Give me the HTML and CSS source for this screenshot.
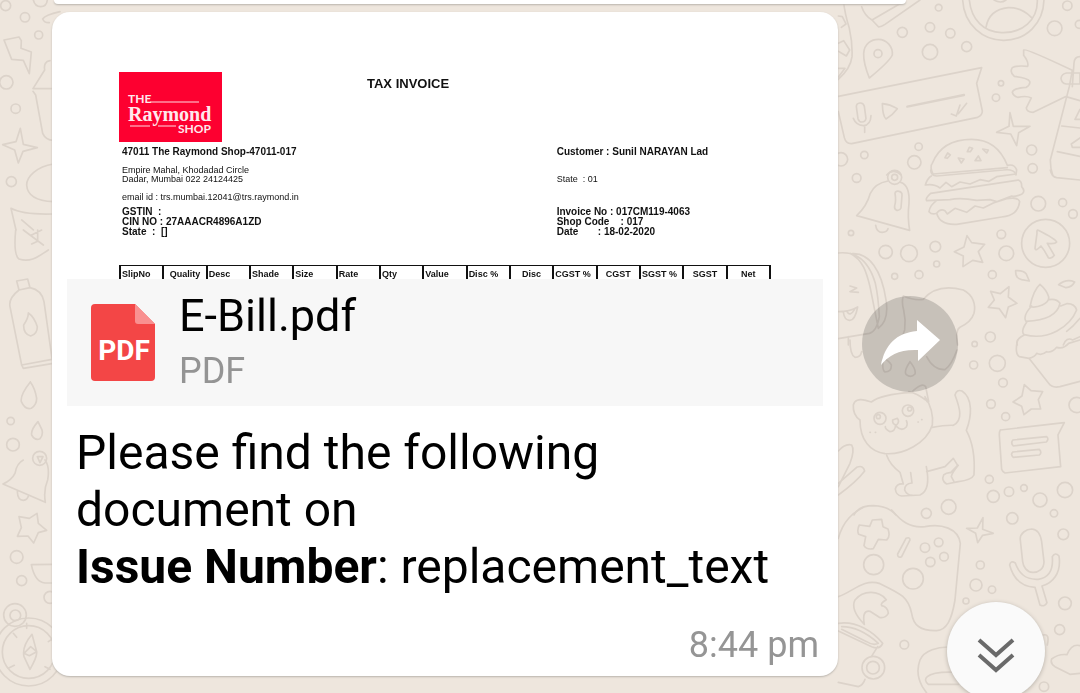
FILE: index.html
```html
<!DOCTYPE html>
<html lang="en">
<head>
<meta charset="utf-8">
<meta name="viewport" content="width=device-width, initial-scale=1">
<title>Chat</title>
<link rel="stylesheet" href="styles.css">
</head>
<body>
<svg class="wallpaper" viewBox="0 0 1080 693" preserveAspectRatio="xMidYMid slice" aria-hidden="true">
  <g transform="translate(830 0) scale(.3333)">
    <path d="M95 20Q104 47 126 60L146 81Q154 80 165 73L270 0M126 60L215 8M40 0Q44 40 58 85Q68 130 66 170Q62 205 25 238M25 48l12 2 11 22-14 10M25 130l16-8 18 28-10 18-24-14M25 205h20l-20 26"/>
    <path d="M398 0C402 75 460 122 522 121C590 120 640 70 642 0M418 0C424 60 462 97 515 98C577 100 624 60 622 0M468 82Q478 28 535 23Q575 22 604 52M492 0q20 12 36 0"/>
    <path d="M118 234Q100 190 101 160C103 130 125 118 145 118C171 118 189 141 187 165Q178 185 118 234Z"/><circle cx="144" cy="161" r="12"/>
    <path d="M25 289L455 203L440 250L457 333Q457 346 443 352L65 431Q48 432 43 413L25 335M79 320q0-10 11-11 10-1 13 10l5 36q-2 11-12 11-9 0-12-10zM70 355q8 20 30 22 22-2 23-30M104 377v20M157 311Q180 313 202 326Q187 346 168 357Q158 348 157 311M364 342l15 6 11-33M385 341l25-31"/><path d="M232 320L402 285" stroke-width="7"/>
    <path d="M582 150Q588 145 727 211M706 290L610 337Q590 336 589 324L604 294Q590 286 563 292Q550 288 547 277Q551 264 589 262Q602 254 599 244Q594 234 553 229Q538 217 547 203Q558 196 593 199Q597 187 581 166V150M727 211L718 260L661 480Q661 505 668 525M750 170Q733 170 732 190L727 260M693 235q2-14 17-16h40v33h-41q-14-2-16-17M708 290l42 12M695 378l55 6M682 455l68 14M750 328l-15 30h15M750 414l-26 18 3 10h23"/>
    <path d="M540 338L550 379L600 379L566 398L560 437L542 402L500 397L537 379Z"/>
    <path d="M310 525Q298 500 307 490Q335 418 425 418C475 418 510 440 532 496Q554 491 560 510L558 525M310 522L532 503M345 473l8-14 8 6-9 10zM412 455l6-13 10 3-7 10zM385 474l17 3-8 12zM435 482l10-14 8 14zM458 447l17 3-5 9z"/>
    <circle cx="326" cy="23" r="10"/><circle cx="217" cy="97" r="15"/><circle cx="300" cy="82" r="14"/><circle cx="361" cy="100" r="14"/><circle cx="300" cy="156" r="23"/><circle cx="410" cy="140" r="15"/><circle cx="712" cy="17" r="14"/><circle cx="674" cy="85" r="22"/><circle cx="748" cy="73" r="12"/><circle cx="513" cy="250" r="8"/><circle cx="498" cy="293" r="11"/><circle cx="266" cy="440" r="11"/><circle cx="253" cy="487" r="20"/><circle cx="103" cy="465" r="11"/><circle cx="33" cy="478" r="20"/><circle cx="605" cy="450" r="15"/><circle cx="608" cy="505" r="14"/><path d="M170 525q20-22 43 0"/>
  </g>
  <g transform="translate(830 170) scale(.3333)">
    <path d="M80 137Q110 110 121 70Q135 40 174 33M212 37Q240 45 237 100Q232 140 239 181L80 137M137 166Q140 187 157 187Q171 186 174 176M195 70q2-8 12-6 10 2 9 12l-3 38q-4 9-13 7-8-3-6-14 5-15 1-37z"/><circle cx="194" cy="22" r="21"/><circle cx="194" cy="22" r="9"/>
    <path d="M302 0Q303 17 320 18L520 0Q550 -4 558 12L500 20L477 34L450 29L420 42L390 36L365 50L348 37L330 54Q312 40 286 45Q292 25 304 18M302 70L565 30Q576 34 575 50Q588 65 575 73Q553 82 545 78L500 95L480 89L440 91Q390 82 360 89L290 92Q285 85 302 70M320 92Q300 105 297 125Q305 135 320 130Q330 115 345 122L352 132L375 115L410 127L435 108L460 114L490 99L530 86Q565 80 569 95C565 125 548 137 515 141L380 163Q330 166 320 130"/>
    <path d="M411 197L425 218L464 223L445 245L458 277L428 271L399 290L400 258L373 245L402 231ZM537 350L535 381L561 400L535 411L527 443L508 416L475 412L493 390L482 364L511 371Z"/>
    <circle cx="647" cy="220" r="72"/><path d="M625 181Q620 178 621 190L615 235Q617 245 633 228Q643 240 655 263Q665 268 673 256Q662 237 652 220Q675 223 680 216Q676 207 625 181Z"/>
    <path d="M661 0Q665 20 680 23L750 30M557 302Q580 300 589 312L598 333L575 329Q556 325 557 302ZM686 344Q710 325 734 336Q725 352 708 353ZM600 410Q610 360 630 343Q650 360 656 380C660 402 620 415 600 410ZM605 408Q577 438 588 454Q680 450 690 400Q680 385 657 389M592 454Q570 485 583 494C655 513 720 470 740 420Q734 400 710 401L692 408M583 495Q555 508 562 525M750 445Q730 470 710 484M700 525q10-25 28-15l22-10"/>
    <path d="M25 249C90 242 120 285 136 340Q145 380 148 440Q140 485 118 490L25 506M60 250C100 270 110 310 120 350L145 475Q178 450 168 390C155 300 117 248 67 251M60 348l20 6-20 11 25 2M25 425Q60 425 83 411Q75 453 58 451Q43 450 40 426M52 426q8 15 22-8M55 500v25"/>
    <path d="M220 378Q255 393 280 388C310 352 355 348 400 360C430 375 438 405 432 430Q424 456 390 472Q375 480 383 525M220 378Q214 395 221 420Q228 450 224 480Q215 510 195 525"/>
    <circle cx="80" cy="24" r="13"/><circle cx="63" cy="189" r="8"/><circle cx="167" cy="246" r="20"/><circle cx="237" cy="250" r="25"/><circle cx="316" cy="230" r="16"/><circle cx="320" cy="282" r="9"/><circle cx="194" cy="319" r="9"/><circle cx="267" cy="314" r="12"/><circle cx="514" cy="193" r="13"/><circle cx="529" cy="250" r="22"/><circle cx="625" cy="101" r="22"/><circle cx="698" cy="98" r="12"/><circle cx="729" cy="132" r="13"/><circle cx="487" cy="314" r="12"/><circle cx="481" cy="501" r="15"/>
  </g>
  <g transform="translate(830 340) scale(.3333)">
    <path d="M124 186C150 165 200 160 245 157Q275 126 287 140L296 185Q291 190 285 170Q312 210 307 255C290 310 220 345 165 341C120 335 90 300 90 240Q68 225 70 195Q75 173 107 181ZM236 155Q260 160 287 180M307 262Q345 255 370 256C400 240 390 205 375 165Q380 147 396 153C430 175 425 230 409 271C430 310 435 360 432 405Q425 420 385 425L350 432Q333 422 341 405Q350 397 362 398L383 376L370 355L345 380L290 395M170 346Q180 375 210 397L220 432Q200 430 196 447Q198 466 215 468L270 465C294 455 298 425 289 380M242 398L246 429Q224 430 224 450Q230 465 247 466M385 376Q365 400 364 410L372 425M188 240Q186 253 200 255Q210 245 202 235ZM197 255Q195 275 180 275Q165 268 166 260M200 260Q215 275 229 261Q234 250 229 242M120 277h1M136 277h1M264 246h1M275 239h1"/><circle cx="150" cy="235" r="18"/><circle cx="234" cy="212" r="17"/><circle cx="145" cy="230" r="6"/><circle cx="239" cy="207" r="6"/>
    <path d="M25 333Q45 310 65 315Q75 330 60 370L25 440M25 430L80 382Q100 374 104 393Q80 425 25 465M60 0Q60 45 75 52Q92 52 95 35"/>
    <path d="M511 270L703 248L684 285L692 380L525 399Q517 395 515 388L508 285Q508 274 511 270M549 300L650 290Q658 297 649 306L550 318Q541 308 549 300M549 336L628 328Q637 338 628 345L550 352Q540 343 549 336"/>
    <path d="M583 134L603 152L638 155L625 179L632 207L604 207L582 224L575 199L549 186L576 168Z"/>
    <path d="M563 0Q553 40 568 50L597 55Q615 50 620 40Q635 48 650 35Q665 40 680 22Q700 28 716 10L750 0M597 55L656 130Q666 145 690 140L750 124M240 65Q220 95 229 104Q243 115 255 102Q259 88 240 65M160 55Q155 90 165 96Q185 96 184 75Q178 63 160 55M290 50Q310 90 345 89Q365 75 381 30"/>
    <path d="M72 525Q85 497 130 497Q175 498 198 525"/>
    <circle cx="434" cy="12" r="8"/><circle cx="431" cy="75" r="12"/><circle cx="502" cy="70" r="24"/><circle cx="519" cy="128" r="13"/><circle cx="483" cy="192" r="13"/><circle cx="527" cy="230" r="12"/><circle cx="740" cy="195" r="23"/><circle cx="478" cy="418" r="12"/><circle cx="490" cy="469" r="18"/><circle cx="537" cy="455" r="14"/><circle cx="582" cy="444" r="10"/><circle cx="630" cy="480" r="21"/><circle cx="705" cy="450" r="23"/><circle cx="356" cy="501" r="22"/>
  </g>
  <g transform="translate(830 510) scale(.3333)">
    <path d="M25 85C40 30 70 8 100 -8M185 0C215 35 240 55 285 50C335 40 385 55 391 100L375 270C365 330 350 360 320 362C270 363 250 345 245 310C235 260 210 250 150 221C100 205 70 245 25 260M127 30L155 28L159 50L174 57Q182 80 170 90L145 88L130 116Q110 120 102 107L107 80L86 73Q80 60 88 45L119 49ZM228 85Q240 80 240 90L215 140Q202 145 203 132Z"/>
    <circle cx="131" cy="164" r="30"/><circle cx="249" cy="206" r="31"/><circle cx="285" cy="113" r="14"/><circle cx="326" cy="97" r="13"/><circle cx="342" cy="140" r="13"/><circle cx="301" cy="156" r="14"/>
    <path d="M459 23L458 58L490 70L458 76L443 98L437 70L410 55L442 54Z"/>
    <path d="M571 90C568 70 590 57 605 57C623 58 632 75 635 95L642 155C642 177 625 188 608 187C590 186 580 171 578 155ZM539 165Q542 150 556 159C570 200 600 210 625 208C659 203 670 175 667 140Q676 125 687 138C695 190 667 220 636 228L651 278Q645 292 630 285L615 232C575 230 551 210 539 165"/>
    <path d="M103 343Q60 300 75 270C100 240 145 240 169 269Q150 280 155 287Q173 290 175 310Q165 326 148 322L120 304Q95 300 103 343M25 340C80 332 130 365 158 400Q150 420 125 410L25 363M35 350Q90 350 145 400Q130 408 110 395L35 358M143 410L126 437M25 517L85 530Q100 525 105 508"/>
    <circle cx="130" cy="473" r="34"/><circle cx="129" cy="473" r="19"/>
    <path d="M380 413C320 405 280 425 270 450Q255 490 277 530L290 549M385 487Q310 483 292 500Q280 510 295 523L385 523M750 407Q725 400 711 434Q685 431 665 447Q660 460 675 470L720 493L750 490M640 375Q660 370 652 405"/>
    <circle cx="289" cy="10" r="15"/><circle cx="547" cy="25" r="17"/><circle cx="672" cy="10" r="11"/><circle cx="700" cy="73" r="16"/><circle cx="451" cy="165" r="12"/><circle cx="438" cy="225" r="18"/><circle cx="486" cy="239" r="11"/><circle cx="408" cy="273" r="9"/><circle cx="705" cy="280" r="19"/><circle cx="689" cy="359" r="15"/><circle cx="223" cy="404" r="13"/><circle cx="642" cy="530" r="14"/>
  </g>
  <g transform="scale(.3333)">
    <path d="M12 120L57 111L64 122L63 145L94 156L88 221L70 181L35 178ZM61 385L70 433L112 443L69 454L55 489L44 450L8 434L48 425ZM150 182Q130 185 134 210L99 266H160M99 274L107 285L128 400Q137 420 160 421M160 492C110 500 80 530 80 555C82 585 105 603 160 605M48 690L33 625Q70 645 160 642M65 660l35 30M100 0q5 20 22 20 18 0 20-20M128 57Q135 45 180 35M128 57q5 12 20 11"/>
    <circle cx="17" cy="17" r="15"/><circle cx="75" cy="52" r="14"/><circle cx="116" cy="105" r="12"/><circle cx="19" cy="247" r="20"/><circle cx="47" cy="326" r="14"/><circle cx="34" cy="545" r="15"/>
  </g>
  <g transform="translate(0 230) scale(.3333)">
    <path d="M47 0Q40 75 57 87C95 100 120 75 145 60M70 0L130 45M95 15l30-15M95 42l18-8V0M50 153L83 147L90 173L57 180ZM57 180Q25 205 30 230L65 405L70 415L160 400M90 173Q125 180 132 215L156 385M65 405L156 388M85 249Q85 265 71 285Q70 312 92 318Q112 312 112 290Q102 260 85 249M91 456Q60 495 64 515Q75 540 94 535Q110 525 110 505Q105 475 91 456M114 575Q92 600 95 615Q105 633 120 626Q130 615 126 600ZM112 680l8 18 9-18z"/>
    <circle cx="32" cy="573" r="11"/><circle cx="39" cy="644" r="19"/><circle cx="119" cy="685" r="21"/>
  </g>
  <g transform="translate(0 460) scale(.3333)">
    <path d="M70 0Q50 10 45 40Q35 60 9 72L136 127Q130 90 143 60Q150 20 135 0M52 95Q53 120 70 121Q82 120 85 108M57 170L88 175L111 160L115 190L140 211L115 218L101 249L84 228L52 229L64 203ZM160 313L94 314Q105 367 135 369H160M96 523Q65 560 72 590L90 628Q112 590 110 575ZM72 580l20-20 18 15-22 12zM80 490v15M40 520l10 12M25 625l18-9M145 545l12-8M135 620l15 8"/>
    <circle cx="50" cy="291" r="19"/><circle cx="65" cy="362" r="15"/><circle cx="150" cy="412" r="18"/><circle cx="45" cy="465" r="34"/><circle cx="46" cy="466" r="16"/><circle cx="86" cy="576" r="79"/><circle cx="86" cy="576" r="102"/>
  </g>
</svg>

<main class="chat">
  <div class="bubble previous"></div>
  <div class="message-row">
    <article class="bubble message">
      <div class="preview">
        <header class="invoice-header">
          <svg class="brand" viewBox="0 0 103 70" role="img" aria-label="The Raymond Shop">
            <rect width="103" height="70" fill="#fd0030"/>
            <text class="brand-small" x="9" y="31">THE</text>
            <text class="brand-name" x="9" y="49">Raymond</text>
            <text class="brand-small" x="59" y="61">SHOP</text>
            <path d="M31 30H80M11 54H31M39 54H57" stroke="#ffdbe2"/>
          </svg>
          <h1 class="invoice-title">TAX INVOICE</h1>
        </header>
        <div class="invoice-details">
          <section>
            <h2 class="party">47011 The Raymond Shop-47011-017</h2>
            <p class="address">Empire Mahal, Khodadad Circle
Dadar, Mumbai 022 24124425

email id : trs.mumbai.12041@trs.raymond.in</p>
            <p class="numbers">GSTIN  :
CIN NO : 27AAACR4896A1ZD
State  :  []</p>
          </section>
          <section>
            <h2 class="party">Customer : Sunil NARAYAN Lad</h2>
            <p class="address">
State  : 01

 </p>
            <p class="numbers">Invoice No : 017CM119-4063
Shop Code    : 017
Date       : 18-02-2020</p>
          </section>
        </div>
        <table class="items">
          <thead><tr>
            <th>SlipNo</th><th class="mid">Quality</th><th>Desc</th><th>Shade</th><th>Size</th><th>Rate</th><th>Qty</th><th>Value</th><th>Disc %</th><th class="mid">Disc</th><th>CGST %</th><th class="mid">CGST</th><th>SGST %</th><th class="mid">SGST</th><th class="mid">Net</th>
          </tr></thead>
        </table>
      </div>
      <div class="attachment">
        <svg class="file-icon" viewBox="0 0 64 77" aria-hidden="true">
          <path d="M4 0H44L64 20V73Q64 77 60 77H4Q0 77 0 73V4Q0 0 4 0Z" fill="#f34646"/>
          <path d="M44 0L64 20H47Q44 20 44 17Z" fill="#f99090"/>
          <text x="33" y="56" text-anchor="middle">PDF</text>
        </svg>
        <div class="file-text">
          <div class="file-name">E-Bill.pdf</div>
          <div class="file-type">PDF</div>
        </div>
      </div>
      <p class="caption">Please find the following document on<br><strong>Issue Number</strong>: replacement_text</p>
      <time class="time">8:44 pm</time>
    </article>
    <button class="forward" type="button" aria-label="Forward">
      <svg viewBox="0 0 96 96" aria-hidden="true"><path d="M55 24L78 44L56 65V54C38 53 27 59 19 69C23 49 34 37 55 35Z" fill="#fff"/></svg>
    </button>
  </div>
</main>
<button class="scroll-down" type="button" aria-label="Scroll to latest">
  <svg viewBox="0 0 98 98" aria-hidden="true"><path d="M32 38L49 53L66 38M32 53L49 68L66 53" fill="none" stroke="#6a6a6a" stroke-width="4"/></svg>
</button>
</body>
</html>
```
FILE: styles.css
```css
* { box-sizing: border-box; }

body {
  margin: 0;
  min-height: 100vh;
  overflow: hidden;
  background: #eee6dd;
  font-family: Roboto, sans-serif;
  color: #000;
}

h1, h2, p { margin: 0; }

.wallpaper {
  position: fixed;
  inset: 0;
  width: 100%;
  height: 100%;
  fill: none;
  stroke: #dcd3ca;
  stroke-width: 5;
  stroke-linecap: round;
  stroke-linejoin: round;
}

.chat {
  position: relative;
  display: flex;
  flex-direction: column;
  gap: 8px;
}

.bubble {
  background: #fff;
  border-radius: 18px;
  box-shadow: 0 1px 2px #b9b4ad;
}

.previous {
  height: 4px;
  margin: 0 174px 0 54px;
  border-radius: 0 0 20px 20px;
}

.message-row {
  display: flex;
  align-items: center;
  gap: 24px;
  padding: 0 122px 16px 52px;
}

.message {
  flex: 1;
  display: flex;
  flex-direction: column;
  padding: 0 15px 10px;
}

.preview {
  height: 267px;
  overflow: hidden;
  padding: 60px 52px 0;
  font-family: "Liberation Sans", Arial, sans-serif;
  color: #111;
}

.invoice-header {
  display: flex;
  gap: 145px;
}

.brand { width: 103px; height: 70px; }
.brand text { fill: #ffe9ed; }
.brand-small { font: 700 12px Lato, sans-serif; }
.brand-name { font: 700 20px "Liberation Serif", serif; }

.invoice-title {
  padding-top: 4px;
  font-size: 13px;
  line-height: 15px;
}

.invoice-details {
  display: grid;
  grid-template-columns: 2fr 1fr;
  padding: 3px 0 28px;
}

.invoice-details section { padding-left: 3px; }

.party {
  font-size: 10px;
  line-height: 13px;
  white-space: nowrap;
}

.address {
  margin: 8px 0 5px;
  font-size: 9px;
  line-height: 9px;
  white-space: pre;
}

.numbers {
  font-size: 10px;
  font-weight: 700;
  line-height: 10px;
  white-space: pre;
}

.items {
  width: 100%;
  table-layout: fixed;
  border-collapse: collapse;
}

.items th {
  padding: 3px 0 6px 1px;
  border: 1px solid #111;
  border-width: 1px 2px 0;
  font-size: 9px;
  line-height: 11px;
  text-align: left;
  white-space: nowrap;
}

.items .mid { padding-left: 0; text-align: center; }

.attachment {
  display: flex;
  gap: 24px;
  padding: 9px 24px 8px;
  background: #f7f7f7;
}

.file-icon {
  width: 64px;
  height: 77px;
  margin-top: 16px;
}

.file-icon text {
  fill: #fff;
  font: 700 28px Roboto, sans-serif;
}

.file-name { font-size: 45px; line-height: 56px; }
.file-type { font-size: 36px; line-height: 54px; color: #949494; }

.caption {
  padding: 18px 9px 0;
  font-size: 48px;
  line-height: 57px;
}

.time {
  align-self: flex-end;
  padding: 29px 4px 0 0;
  font-size: 36px;
  line-height: 42px;
  color: #959595;
}

button {
  padding: 0;
  border: 0;
  border-radius: 50%;
}

.forward {
  flex: none;
  width: 96px;
  height: 96px;
  background: #00000029;
}

.scroll-down {
  position: fixed;
  right: 35px;
  bottom: -7px;
  width: 98px;
  height: 98px;
  background: #fafafa;
  box-shadow: 0 1px 4px #b5afa7;
}

button svg { display: block; width: 100%; }
```
